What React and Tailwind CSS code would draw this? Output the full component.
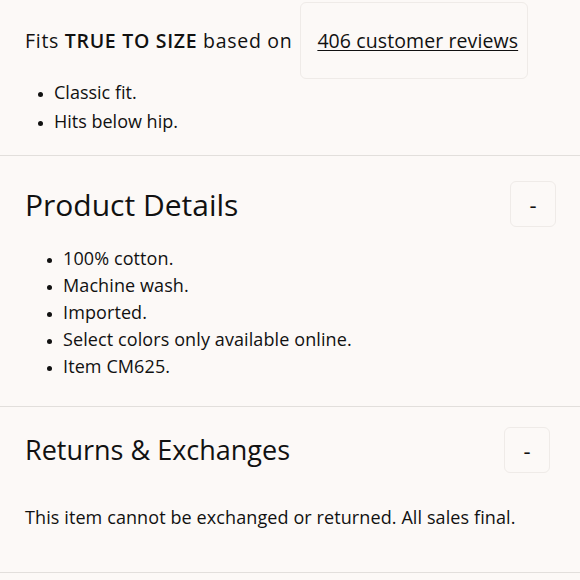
import React from 'react';

const font = { fontFamily: '"Open Sans", Lato, sans-serif' };

const ToggleButton = ({ className = '' }) => (
  <button className={`w-[46px] h-[46px] rounded-md border border-[#efebe8] flex items-center justify-center text-[22px] text-[#111] ${className}`}>
    -
  </button>
);

const App = () => {
  const details = [
    '100% cotton.',
    'Machine wash.',
    'Imported.',
    'Select colors only available online.',
    'Item CM625.',
  ];

  return (
    <div className="w-[580px] h-[580px] bg-[#fcf9f7] text-[#111] overflow-hidden" style={font}>
      {/* fit section */}
      <div className="border-b border-[#e2dfdc] pb-[19px]">
        <div className="flex items-start pl-[25px] pt-[2px]">
          <p className="text-[19.5px] tracking-[0.7px] leading-[29px] mt-[24px] mr-[8px]">
            Fits <span className="font-semibold">TRUE TO SIZE</span> based on
          </p>
          <div className="w-[228px] h-[77px] rounded-md border border-[#efebe8] pt-[23px] pl-[16px]">
            <a href="#" className="text-[19.5px] tracking-[0.1px] leading-[29px] underline underline-offset-2">406 customer reviews</a>
          </div>
        </div>
        <ul className="list-disc marker:text-[13px] pl-[54px] text-[18px] leading-[29px] -mt-[1px]">
          <li>Classic fit.</li>
          <li>Hits below hip.</li>
        </ul>
      </div>

      {/* product details */}
      <div className="border-b border-[#e2dfdc] pb-[26px]">
        <div className="flex items-center justify-between pl-[25px] pr-[24px] pt-[25px]">
          <h2 className="text-[30px]">Product Details</h2>
          <ToggleButton />
        </div>
        <ul className="list-disc marker:text-[13px] pl-[63px] text-[18px] tracking-[0.1px] leading-[27px] mt-[18px]">
          {details.map(d => (
            <li key={d}>{d}</li>
          ))}
        </ul>
      </div>

      {/* returns */}
      <div className="border-b border-[#e2dfdc] pb-[41px]">
        <div className="flex items-center justify-between pl-[25px] pr-[30px] pt-[20px]">
          <h2 className="text-[27px]">Returns &amp; Exchanges</h2>
          <ToggleButton />
        </div>
        <p className="pl-[25px] text-[18px] tracking-[0.1px] mt-[31px]">This item cannot be exchanged or returned. All sales final.</p>
      </div>
    </div>
  );
};

export default App;
